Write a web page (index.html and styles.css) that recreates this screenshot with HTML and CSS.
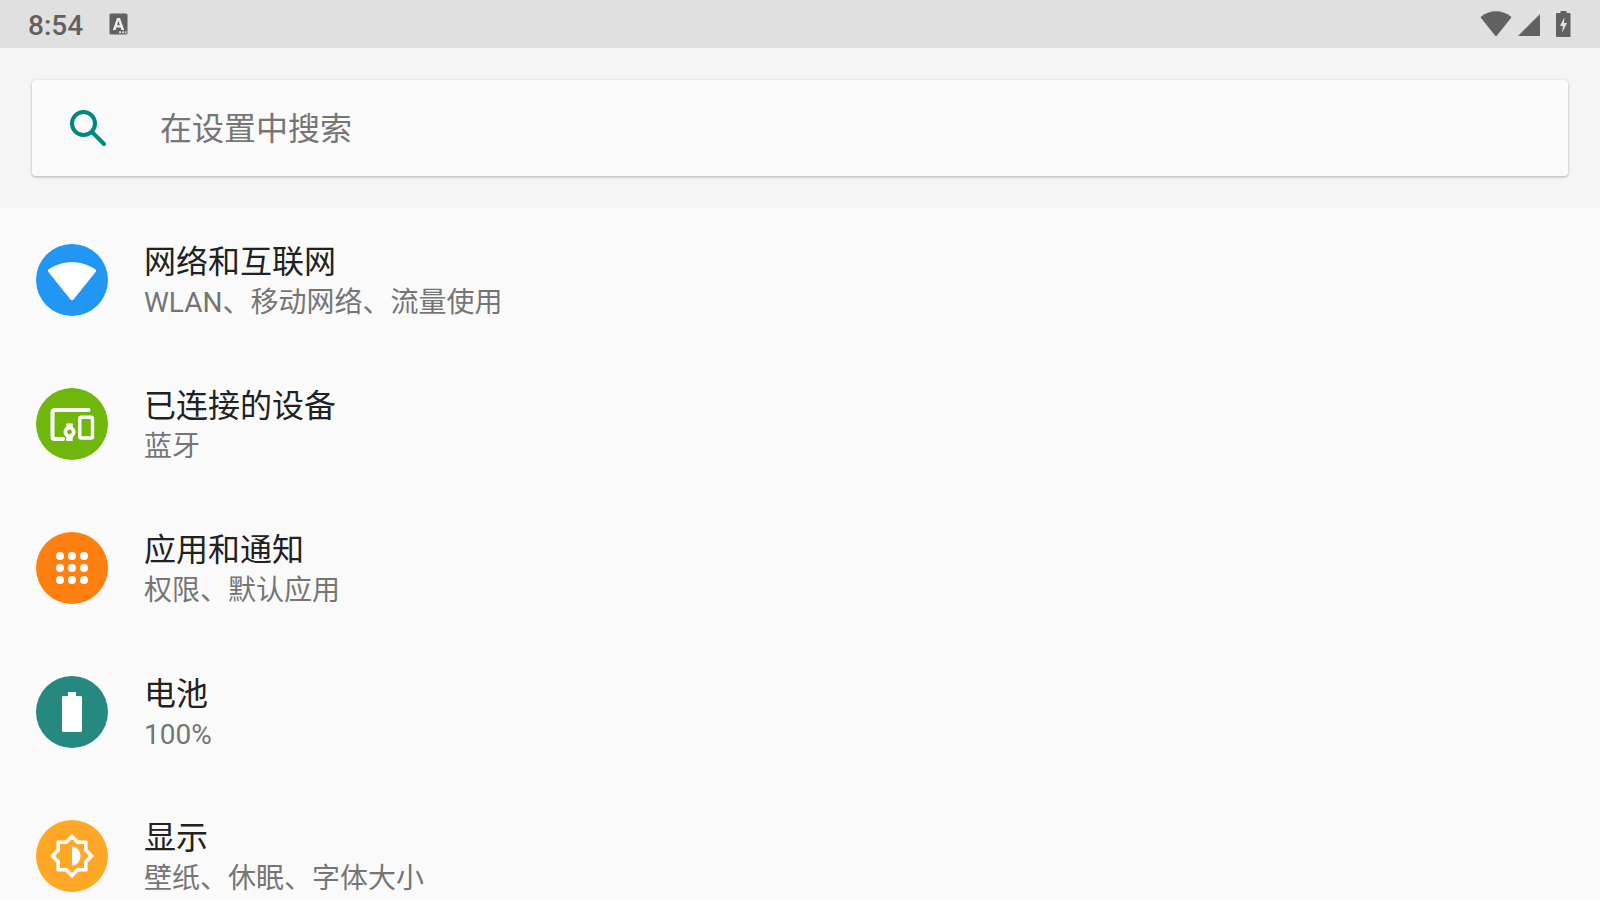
FILE: index.html
```html
<!DOCTYPE html>
<html lang="zh-CN">
<head>
<meta charset="UTF-8" />
<title>设置</title>
<link rel="stylesheet" href="styles.css">
</head>
<body>

<div class="status-bar">
  <span class="clock">8:54</span>
  <svg class="status-a" viewBox="0 0 20 22">
    <rect x="0.5" y="0.5" width="18" height="21" rx="1.5" fill="#616161"/>
    <path d="M3.800 17 8 5h3l4.200 12h-2.800l-.8-2.600H7.400L6.600 17zM8.100 12.200h2.800L9.500 7.800z" fill="#eeeeee"/>
    <rect x="10" y="18.300" width="2" height="2" fill="#e0e0e0"/>
    <rect x="13" y="18.300" width="2" height="2" fill="#e0e0e0"/>
    <rect x="16" y="18.300" width="1.500" height="2" fill="#e0e0e0"/>
  </svg>
  <div class="status-right">
    <svg class="status-wifi" viewBox="0 0 32 26">
      <path d="M1 5.800C5.300 2.200 10.300.3 16 .3S26.700 2.200 31 5.800c.3.300.3.700.1 1L16.800 24.800c-.5.5-1.100.5-1.600 0L.9 6.800c-.2-.3-.2-.7.1-1z" fill="#616161"/>
    </svg>
    <svg class="status-signal" viewBox="0 0 22 22">
      <path d="M0 22 22 0v22z" fill="#616161"/>
    </svg>
    <svg class="status-battery" viewBox="0 0 15 26">
      <path d="M4.500 0h6v2h3c.6 0 1 .4 1 1v22c0 .6-.4 1-1 1h-12.500c-.6 0-1-.4-1-1V3c0-.6.4-1 1-1h3.500z" fill="#616161"/>
      <path d="M8.500 6 4 15h3l-1 7 5-10H8z" fill="#e0e0e0"/>
    </svg>
  </div>
</div>

<div class="search-area">
  <div class="search-box">
    <svg class="search-icon" viewBox="0 0 38 38">
      <circle cx="14.500" cy="14.500" r="11.500" fill="none" stroke="#00897b" stroke-width="4"/>
      <path d="M23 23 35 35" fill="none" stroke="#00897b" stroke-width="4" stroke-linecap="round"/>
    </svg>
    <span class="search-text">在设置中搜索</span>
  </div>
</div>

<div class="list">
  <div class="row">
    <div class="circle blue">
      <svg viewBox="0 0 72 72">
        <path d="M12.500 25.500C19 21 27 18.300 36 18.300S53 21 59.500 25.500c.8.6.9 1.500.3 2.300L37.500 55.500c-.8 1-2.200 1-3 0L12.200 27.800c-.6-.8-.5-1.700.3-2.300z" fill="#fff"/>
      </svg>
    </div>
    <div class="row-text">
      <div class="row-title">网络和互联网</div>
      <div class="row-sub">WLAN、移动网络、流量使用</div>
    </div>
  </div>

  <div class="row">
    <div class="circle green">
      <svg viewBox="0 0 72 72">
        <path d="M52.500 22H19c-1.600 0-2.500.9-2.500 2.500v24c0 1.400.7 2.500 2.200 2.500H27" fill="none" stroke="#fff" stroke-width="4" stroke-linecap="round"/>
        <rect x="43.800" y="29.200" width="12.700" height="20.800" rx="1.500" fill="none" stroke="#fff" stroke-width="3.400"/>
        <circle cx="33.500" cy="44" r="4.200" fill="none" stroke="#fff" stroke-width="3.600"/>
        <rect x="30.300" y="35.500" width="6.400" height="4.500" fill="#fff"/>
        <rect x="30.300" y="48" width="6.400" height="5" fill="#fff"/>
      </svg>
    </div>
    <div class="row-text">
      <div class="row-title">已连接的设备</div>
      <div class="row-sub">蓝牙</div>
    </div>
  </div>

  <div class="row">
    <div class="circle orange">
      <svg viewBox="0 0 72 72" fill="#fff">
        <circle cx="24" cy="24" r="4"/><circle cx="36" cy="24" r="4"/><circle cx="48" cy="24" r="4"/>
        <circle cx="24" cy="36" r="4"/><circle cx="36" cy="36" r="4"/><circle cx="48" cy="36" r="4"/>
        <circle cx="24" cy="48" r="4"/><circle cx="36" cy="48" r="4"/><circle cx="48" cy="48" r="4"/>
      </svg>
    </div>
    <div class="row-text">
      <div class="row-title">应用和通知</div>
      <div class="row-sub">权限、默认应用</div>
    </div>
  </div>

  <div class="row">
    <div class="circle teal">
      <svg viewBox="0 0 72 72">
        <path d="M32 16h8v4h4.500c.9 0 1.500.6 1.500 1.500v33c0 .9-.6 1.500-1.500 1.500h-17c-.9 0-1.500-.6-1.500-1.500v-33c0-.9.6-1.500 1.500-1.500H32z" fill="#fff"/>
      </svg>
    </div>
    <div class="row-text">
      <div class="row-title">电池</div>
      <div class="row-sub">100%</div>
    </div>
  </div>

  <div class="row">
    <div class="circle amber">
      <svg viewBox="0 0 72 72">
        <path d="M36 16.500 41.700 22.200H49.800V30.300L55.500 36 49.800 41.700V49.800H41.700L36 55.500 30.300 49.800H22.200V41.700L16.500 36 22.200 30.300V22.200H30.300z" fill="none" stroke="#fff" stroke-width="3.500"/>
        <path d="M36 26.500C41 26.500 44.500 31 44.500 36S41 45.500 36 45.500z" fill="#fff"/>
      </svg>
    </div>
    <div class="row-text">
      <div class="row-title">显示</div>
      <div class="row-sub">壁纸、休眠、字体大小</div>
    </div>
  </div>
</div>

</body>
</html>
```

FILE: styles.css
```css
html, body {
  margin: 0;
  padding: 0;
  height: 900px;
  overflow: hidden;
}
body {
  font-family: Roboto, "Noto Sans CJK SC", sans-serif;
  background: #fafafa;
}
.status-bar {
  height: 48px;
  background: #e0e0e0;
  display: flex;
  align-items: center;
  padding: 0 29px 0 28px;
  color: #616161;
}
.clock {
  font-size: 28px;
  font-weight: 500;
  margin-top: 2px;
}
.status-a {
  width: 20px;
  height: 22px;
  margin-left: 26px;
}
.status-right {
  margin-left: auto;
  display: flex;
  align-items: center;
}
.status-wifi {
  width: 32px;
  height: 26px;
}
.status-signal {
  width: 22px;
  height: 22px;
  margin-left: 6px;
  margin-top: 1px;
}
.status-battery {
  width: 15px;
  height: 26px;
  margin-left: 16px;
}
.search-area {
  height: 160px;
  background: #f5f5f5;
  padding: 32px 32px 0 32px;
  box-sizing: border-box;
}
.search-box {
  height: 96px;
  background: #fafafa;
  border-radius: 4px;
  box-shadow: 0 1px 3px rgba(0,0,0,0.3);
  display: flex;
  align-items: center;
}
.search-icon {
  width: 38px;
  height: 38px;
  margin-left: 37px;
}
.search-text {
  font-size: 32px;
  color: #757575;
  margin-left: 53px;
  margin-bottom: 4px;
}
.row {
  height: 144px;
  display: flex;
  align-items: center;
}
.circle {
  width: 72px;
  height: 72px;
  border-radius: 50%;
  margin-left: 36px;
  flex-shrink: 0;
}
.circle svg {
  display: block;
  width: 72px;
  height: 72px;
}
.blue { background: #2196f3; }
.green { background: #70b70d; }
.orange { background: #ff7f10; }
.teal { background: #26897f; }
.amber { background: #ffa726; }
.row-text {
  margin-left: 36px;
  padding-top: 5px;
}
.row-title {
  font-size: 32px;
  line-height: 40px;
  color: #212121;
}
.row-sub {
  font-size: 28px;
  line-height: 40px;
  margin-top: 1px;
  color: #757575;
}
```
